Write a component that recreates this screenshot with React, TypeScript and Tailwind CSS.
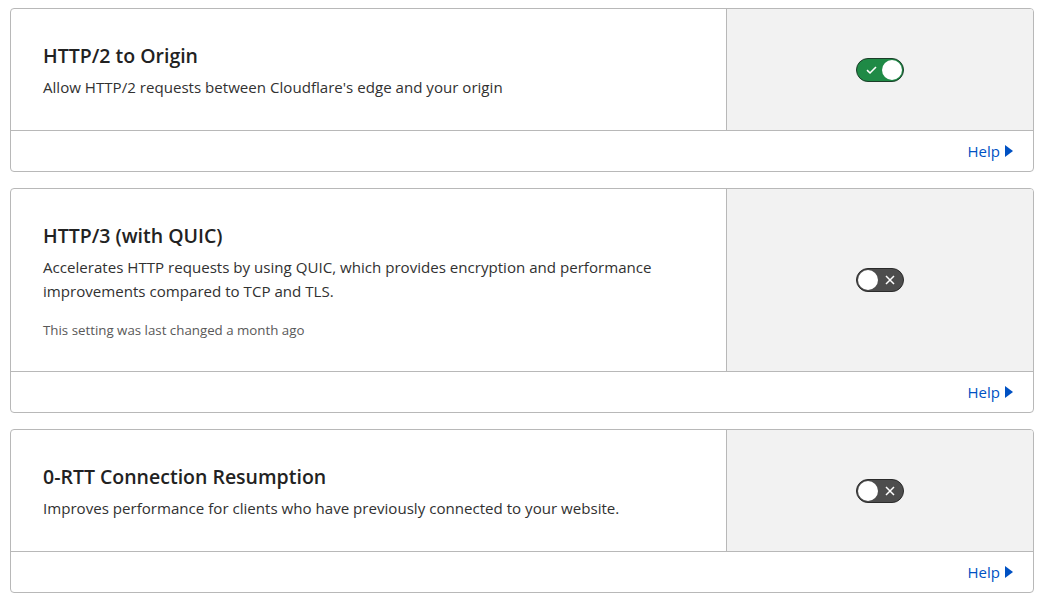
import React from "react";

function Toggle({ on }: { on: boolean }) {
  if (on) {
    return (
      <div className="relative w-[48px] h-[24px] rounded-full bg-[#1f8a46] border border-[#1c3d29] flex items-center">
        <svg className="absolute left-[9px] top-[6px]" width="11" height="10" viewBox="0 0 11 10">
          <path d="M1 5.2 L4 8 L10 2" stroke="#ffffff" strokeWidth="1.6" fill="none" />
        </svg>
        <div className="absolute right-[1px] top-[1px] w-[20px] h-[20px] rounded-full bg-white"></div>
      </div>
    );
  }
  return (
    <div className="relative w-[48px] h-[24px] rounded-full bg-[#4d4d4d] border border-[#2b2b2b] flex items-center">
      <div className="absolute left-[1px] top-[1px] w-[20px] h-[20px] rounded-full bg-white"></div>
      <svg className="absolute right-[8px] top-[6px]" width="10" height="10" viewBox="0 0 10 10">
        <path d="M1 1 L9 9 M9 1 L1 9" stroke="#ffffff" strokeWidth="1.5" fill="none" />
      </svg>
    </div>
  );
}

function Card({
  title,
  desc,
  note,
  on,
}: {
  title: string;
  desc: React.ReactNode;
  note?: string;
  on: boolean;
}) {
  return (
    <div className="border border-[#b8b8b8] rounded-[4px] bg-white overflow-hidden">
      <div className="flex border-b border-[#b8b8b8]">
        <div className="w-[716px] border-r border-[#b8b8b8] pl-[32px] pr-[40px] pt-[33px] pb-[31px]">
          <div className="text-[19.5px] leading-[28px] font-semibold text-[#222222]">{title}</div>
          <div className="mt-[5px] text-[15.1px] leading-[24px] text-[#313131]">{desc}</div>
          {note && (
            <div className="mt-[17px] text-[13.3px] leading-[20px] text-[#595959]">{note}</div>
          )}
        </div>
        <div className="flex-1 bg-[#f2f2f2] flex items-center justify-center">
          <Toggle on={on} />
        </div>
      </div>
      <div className="h-[40px] flex items-center justify-end pr-[20px]">
        <span className="text-[15px] text-[#0051c3]">Help</span>
        <svg className="ml-[5px]" width="8" height="12" viewBox="0 0 8 12">
          <path d="M0 0 L8 6 L0 12 Z" fill="#0051c3" />
        </svg>
      </div>
    </div>
  );
}

export default function App() {
  return (
    <div
      className="w-[1046px] h-[604px] bg-white pl-[10px] pr-[12px] pt-[8px] flex flex-col gap-[16px]"
      style={{ fontFamily: '"Open Sans", "Noto Sans", sans-serif' }}
    >
      <Card
        title="HTTP/2 to Origin"
        desc="Allow HTTP/2 requests between Cloudflare's edge and your origin"
        on={true}
      />
      <Card
        title="HTTP/3 (with QUIC)"
        desc={
          <>
            Accelerates HTTP requests by using QUIC, which provides encryption and performance
            <br />
            improvements compared to TCP and TLS.
          </>
        }
        note="This setting was last changed a month ago"
        on={false}
      />
      <Card
        title="0-RTT Connection Resumption"
        desc="Improves performance for clients who have previously connected to your website."
        on={false}
      />
    </div>
  );
}
